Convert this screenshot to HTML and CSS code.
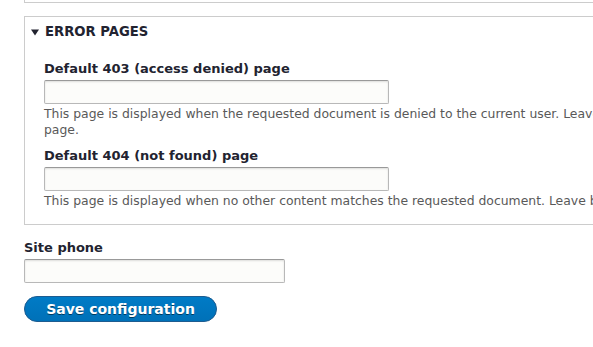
FILE: index.html
```html
<!DOCTYPE html>
<html lang="en">
<head>
  <meta charset="UTF-8">
  <meta name="viewport" content="width=device-width, initial-scale=1">
  <title>Basic site settings</title>
  <link rel="stylesheet" href="styles.css">
</head>
<body>

  <div class="page">
    <!-- end of the previous details box, scrolled off the top -->
    <div class="details details-prev"></div>

    <!-- Error pages -->
    <div class="details">
      <div class="summary">
        <svg class="arrow" width="8" height="7" viewBox="0 0 8 7"><path d="M0 0.5 H8 L4 6.5 Z" fill="#222330"/></svg>
        <span>Error pages</span>
      </div>
      <div class="details-wrapper">
        <div class="form-item">
          <label for="page-403">Default 403 (access denied) page</label>
          <input type="text" id="page-403" class="form-text">
          <div class="description">This page is displayed when the requested document is denied to the current user. Leave blank to display a generic "access denied"<br>page.</div>
        </div>
        <div class="form-item">
          <label for="page-404">Default 404 (not found) page</label>
          <input type="text" id="page-404" class="form-text">
          <div class="description">This page is displayed when no other content matches the requested document. Leave blank to display a generic "page not found" page.</div>
        </div>
      </div>
    </div>

    <div class="form-item site-phone">
      <label for="site-phone">Site phone</label>
      <input type="text" id="site-phone" class="form-text short">
    </div>

    <div class="actions">
      <button class="button button-primary">Save configuration</button>
    </div>
  </div>

</body>
</html>
```

FILE: styles.css
```css
body {
  margin: 0;
  background: #fff;
  color: #222330;
  font: normal 13px/20px "DejaVu Sans", sans-serif;
  overflow: hidden;
}

.page {
  width: 1000px;
  padding-left: 24px;
}

.details {
  border: 1px solid #ccc;
  margin-top: 13px;
}

.details-prev {
  border-top: none;
  height: 2px;
  margin-top: 0;
}

.summary {
  display: flex;
  align-items: center;
  gap: 6px;
  padding: 5px 6px;
  font-size: 13.2px;
  font-weight: bold;
  text-transform: uppercase;
}

.details-wrapper {
  padding: 12px 19px 7px;
}

.form-item {
  margin-bottom: 8px;
}

.form-item label {
  display: block;
  font-weight: bold;
  margin-bottom: 1px;
}

.form-text {
  box-sizing: border-box;
  width: 345px;
  height: 24px;
  padding: 3px 5px;
  border: 1px solid #b8b8b8;
  border-top-color: #999;
  border-radius: 2px;
  background: #fcfcfa;
  box-shadow: inset 0 1px 2px rgba(0, 0, 0, 0.125);
  font: inherit;
}

.form-text.short {
  width: 261px;
}

.description {
  margin-top: 2px;
  font-size: 12.4px;
  line-height: 16px;
  color: #595959;
  white-space: nowrap;
}

.site-phone {
  margin-top: 13px;
}

.actions {
  margin-top: 13px;
}

.button {
  font: 600 14px "DejaVu Sans", sans-serif;
  padding: 4px 20px;
  border-radius: 20em;
  cursor: pointer;
}

.button-primary {
  width: 193px;
  height: 26px;
  color: #fff;
  background-color: #0071b8;
  background-image: linear-gradient(to bottom, #007bc6, #0071b8);
  border: 1px solid #1e5c90;
  text-shadow: 0 1px rgba(0, 0, 0, 0.5);
}
```
